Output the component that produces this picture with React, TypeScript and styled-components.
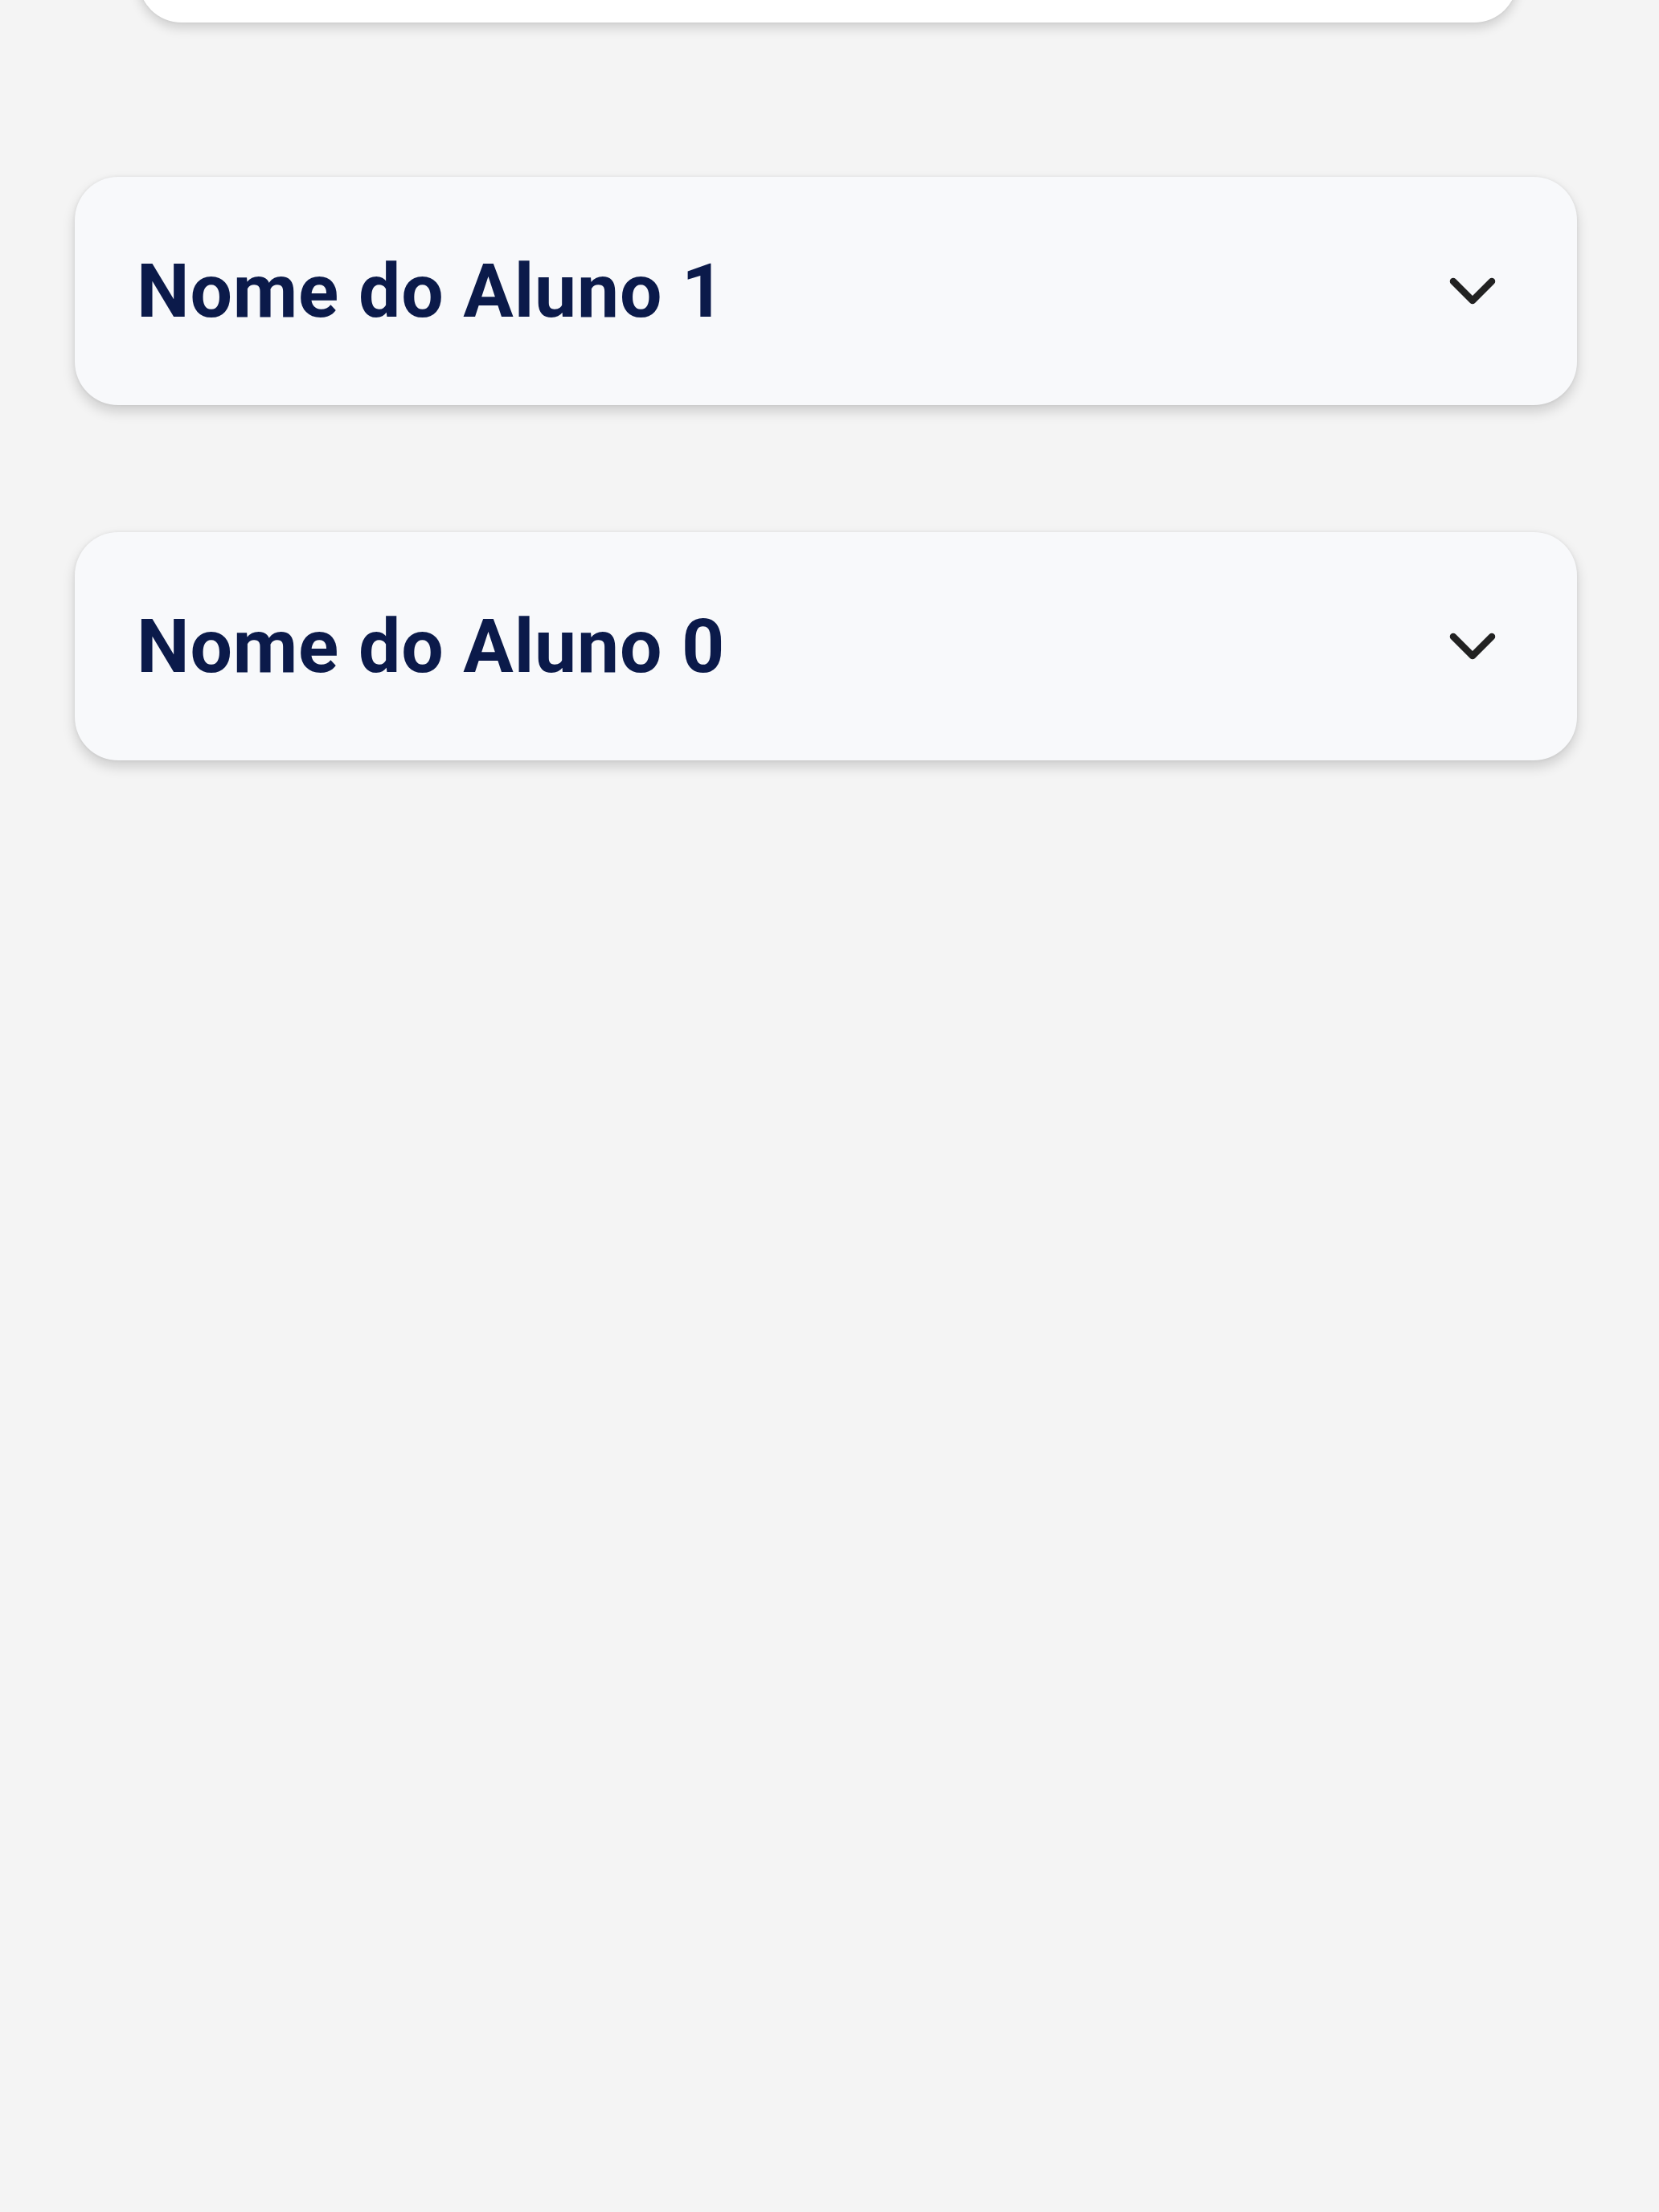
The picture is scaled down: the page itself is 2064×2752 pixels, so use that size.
import React from "react";
import styled, { createGlobalStyle } from "styled-components";

const Global = createGlobalStyle`
  html, body { margin: 0; padding: 0; background: #f4f4f4; }
  body { font-family: Roboto, "Noto Sans", "Liberation Sans", sans-serif; }
`;

const Page = styled.div`
  min-height: 2752px;
  background: #f4f4f4;
  display: flex;
  flex-direction: column;
  overflow: hidden;
`;

const TopCard = styled.div`
  margin: -200px 176px 0 172px;
  height: 228px;
  background: #ffffff;
  border-radius: 0 0 54px 54px;
  box-shadow: 0 7px 14px rgba(0, 0, 0, 0.15), 0 0 4px rgba(0, 0, 0, 0.06);
`;

const List = styled.div`
  display: flex;
  flex-direction: column;
  gap: 158px;
  margin-top: 192px;
  padding-left: 93px;
`;

const Card = styled.div`
  width: 1869px;
  height: 284px;
  box-sizing: border-box;
  background: #f8f9fb;
  border-radius: 54px;
  box-shadow: 0 8px 16px rgba(0, 0, 0, 0.16), 0 0 4px rgba(0, 0, 0, 0.07);
  display: flex;
  align-items: center;
  justify-content: space-between;
  padding: 0 100px 0 77px;
`;

const Name = styled.span`
  font-family: Roboto, "Noto Sans", sans-serif;
  font-weight: 700;
  font-size: 93px;
  color: #0b1a4a;
  letter-spacing: 0.8px;
  line-height: 1;
`;

const Chevron = () => (
  <svg width="60" height="42" viewBox="0 0 60 42" fill="none">
    <polyline
      points="6,9 30,33 54,9"
      stroke="#222222"
      strokeWidth="8.5"
      strokeLinecap="round"
      strokeLinejoin="round"
    />
  </svg>
);

const students = ["Nome do Aluno 1", "Nome do Aluno 0"];

export default function App() {
  return (
    <Page>
      <Global />
      <TopCard />
      <List>
        {students.map((s) => (
          <Card key={s}>
            <Name>{s}</Name>
            <Chevron />
          </Card>
        ))}
      </List>
    </Page>
  );
}
